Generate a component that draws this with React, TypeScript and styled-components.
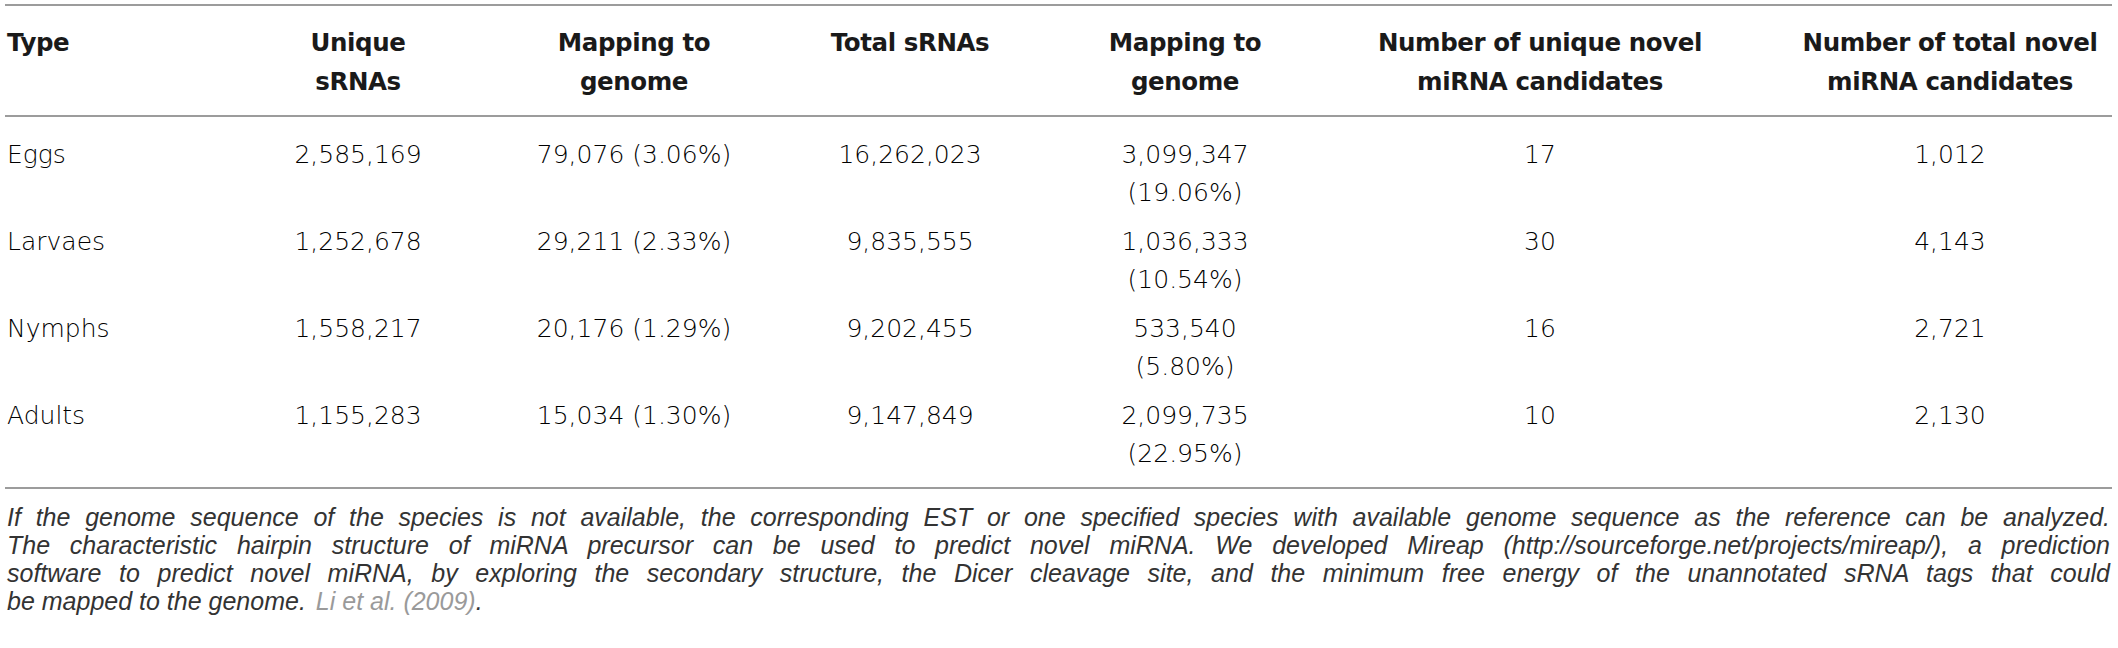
import styled, { createGlobalStyle } from "styled-components"

const GlobalStyle = createGlobalStyle`
	html, body {
		margin: 0;
		padding: 0;
		background: #ffffff;
	}
`

const Page = styled.div`
	width: 2118px;
	padding: 4px 6px 0 5px;
	box-sizing: border-box;
	font-family: "DejaVu Sans", "Liberation Sans", sans-serif;
	color: #333333;
`

const Table = styled.table`
	width: 100%;
	border-collapse: collapse;
	table-layout: fixed;
`

const HeadCell = styled.th<{ $left?: boolean }>`
	font-size: 24.5px;
	font-weight: bold;
	letter-spacing: -0.4px;
	line-height: 39px;
	color: #1a1a1a;
	text-align: ${(p) => (p.$left ? "left" : "center")};
	vertical-align: top;
	white-space: nowrap;
	padding: 17px ${(p) => (p.$left ? "0 14px 2px" : "4px 14px")};
	border-top: 2px solid #9c9c9c;
	border-bottom: 2px solid #9c9c9c;
`

const Row = styled.tr<{ $first?: boolean; $last?: boolean }>`
	td {
		padding-top: ${(p) => (p.$first ? "19px" : "6px")};
		padding-bottom: ${(p) => (p.$last ? "14px" : "5px")};
		border-bottom: ${(p) => (p.$last ? "2px solid #9c9c9c" : "none")};
	}
`

const Cell = styled.td<{ $left?: boolean }>`
	font-size: 25px;
	font-weight: 300;
	line-height: 38px;
	color: #000000;
	text-align: ${(p) => (p.$left ? "left" : "center")};
	vertical-align: top;
	white-space: nowrap;
	padding-left: ${(p) => (p.$left ? "2px" : "4px")};
	padding-right: 4px;
`

const Caption = styled.div`
	margin-top: 14px;
	padding: 0 2px 0 2px;
	font-family: "Liberation Sans", Arial, sans-serif;
	font-style: italic;
	font-size: 25px;
	line-height: 28px;
	color: #333333;
`

const CaptionLine = styled.div<{ $last?: boolean }>`
	text-align: justify;
	text-align-last: ${(p) => (p.$last ? "left" : "justify")};
	white-space: nowrap;
`

const Cite = styled.span`
	color: #9a9a9a;
	margin-left: 10px;
`

const columns = [185, 336, 216, 336, 214, 496, 324]

const headers = [
	["Type"],
	["Unique", "sRNAs"],
	["Mapping to", "genome"],
	["Total sRNAs"],
	["Mapping to", "genome"],
	["Number of unique novel", "miRNA candidates"],
	["Number of total novel", "miRNA candidates"],
]

const rows = [
	["Eggs", "2,585,169", "79,076 (3.06%)", "16,262,023", ["3,099,347", "(19.06%)"], "17", "1,012"],
	["Larvaes", "1,252,678", "29,211 (2.33%)", "9,835,555", ["1,036,333", "(10.54%)"], "30", "4,143"],
	["Nymphs", "1,558,217", "20,176 (1.29%)", "9,202,455", ["533,540", "(5.80%)"], "16", "2,721"],
	["Adults", "1,155,283", "15,034 (1.30%)", "9,147,849", ["2,099,735", "(22.95%)"], "10", "2,130"],
]

const captionLines = [
	"If the genome sequence of the species is not available, the corresponding EST or one specified species with available genome sequence as the reference can be analyzed.",
	"The characteristic hairpin structure of miRNA precursor can be used to predict novel miRNA. We developed Mireap (http://sourceforge.net/projects/mireap/), a prediction",
	"software to predict novel miRNA, by exploring the secondary structure, the Dicer cleavage site, and the minimum free energy of the unannotated sRNA tags that could",
]

const App = () => {
	return (
		<>
			<GlobalStyle />
			<Page>
				<Table>
					<colgroup>
						{columns.map((w, i) => (
							<col key={i} style={{ width: w }} />
						))}
					</colgroup>
					<thead>
						<tr>
							{headers.map((lines, i) => (
								<HeadCell key={i} $left={i === 0}>
									{lines.map((l, j) => (
										<div key={j}>{l}</div>
									))}
								</HeadCell>
							))}
						</tr>
					</thead>
					<tbody>
						{rows.map((row, r) => (
							<Row key={r} $first={r === 0} $last={r === rows.length - 1}>
								{row.map((value, c) => (
									<Cell key={c} $left={c === 0}>
										{Array.isArray(value) ? value.map((v, k) => <div key={k}>{v}</div>) : value}
									</Cell>
								))}
							</Row>
						))}
					</tbody>
				</Table>
				<Caption>
					{captionLines.map((line, i) => (
						<CaptionLine key={i}>{line}</CaptionLine>
					))}
					<CaptionLine $last>
						be mapped to the genome.
						<Cite>Li et al. (2009)</Cite>.
					</CaptionLine>
				</Caption>
			</Page>
		</>
	)
}

export default App
